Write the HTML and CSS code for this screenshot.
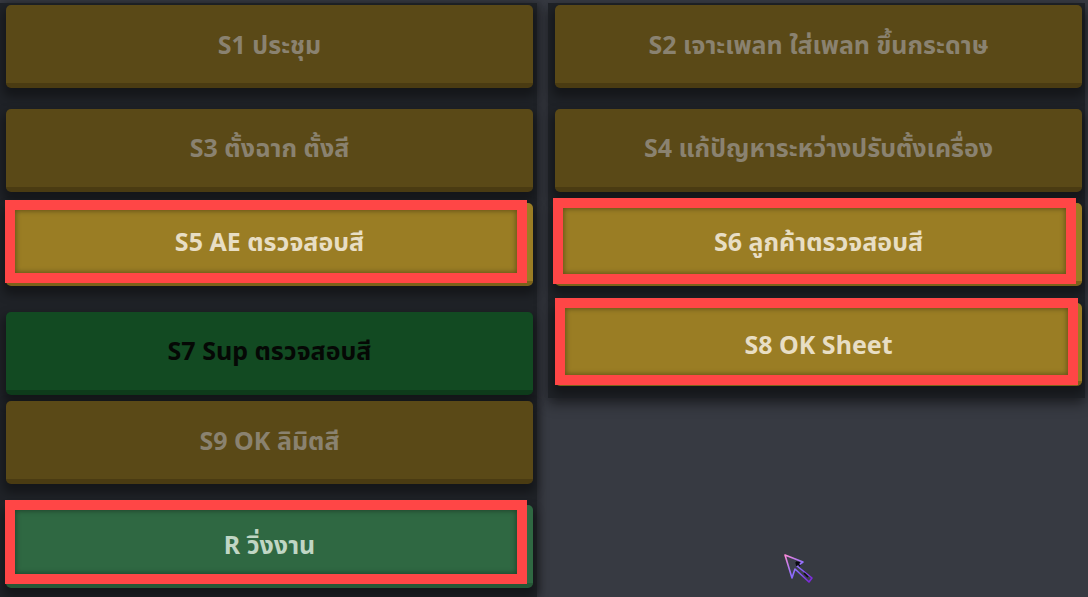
FILE: index.html
```html
<!DOCTYPE html>
<html lang="th">
<head>
<meta charset="utf-8">
<title>Steps</title>
<link rel="stylesheet" href="styles.css">
</head>
<body>
<div class="board">
  <div class="col col-left">
    <div class="slot off2"><div class="btn dim">S1 ประชุม</div></div>
    <div class="slot off7"><div class="btn dim">S3 ตั้งฉาก ตั้งสี</div></div>
    <div class="slot off2"><div class="btn lit">S5 AE ตรวจสอบสี<span class="mark mark-a"></span></div></div>
    <div class="slot off12"><div class="btn green-dark">S7 Sup ตรวจสอบสี</div></div>
    <div class="slot off2"><div class="btn dim">S9 OK ลิมิตสี</div></div>
    <div class="slot off7"><div class="btn green-lit">R วิ่งงาน<span class="mark mark-a"></span></div></div>
  </div>
  <div class="col col-right">
    <div class="slot off2"><div class="btn dim">S2 เจาะเพลท ใส่เพลท ขึ้นกระดาษ</div></div>
    <div class="slot off7"><div class="btn dim">S4 แก้ปัญหาระหว่างปรับตั้งเครื่อง</div></div>
    <div class="slot off2"><div class="btn lit">S6 ลูกค้าตรวจสอบสี<span class="mark mark-b"></span></div></div>
    <div class="slot off4"><div class="btn lit">S8 OK Sheet<span class="mark mark-c"></span></div></div>
  </div>
</div>
<svg class="cursor" width="32" height="32" viewBox="0 0 32 32" aria-hidden="true">
  <defs>
    <linearGradient id="cg" x1="0" y1="0" x2="1" y2="1">
      <stop offset="0" stop-color="#ff8ad8"/>
      <stop offset="0.5" stop-color="#8a6cff"/>
      <stop offset="1" stop-color="#7a1fd6"/>
    </linearGradient>
  </defs>
  <polygon points="1,1 19,8 13,12 28,24 25,28 11,15 8,24" fill="#3d404c" stroke="url(#cg)" stroke-width="1.6" stroke-linejoin="round"/>
  <path d="M12 8 L16 9 M12 8 L13 12 M12 8 L16 12 M20 19 L24 23" stroke="#0a0a12" stroke-width="1.6" fill="none"/>
</svg>
</body>
</html>
```
FILE: styles.css
```css
html, body {
  margin: 0;
  padding: 0;
}
body {
  background: #373a42;
  width: 1088px;
  height: 597px;
  overflow: hidden;
  font-family: "Noto Sans", "Noto Sans Thai", "Open Sans", sans-serif;
  position: relative;
}
.board {
  display: flex;
  gap: 11px;
  padding-top: 3px;
  align-items: flex-start;
}
.col {
  width: 537px;
  box-sizing: border-box;
  display: flex;
  flex-direction: column;
}
.col-left {
  background: #1f2227;
  height: 594px;
  padding-left: 6px;
  box-shadow: 3px 0 8px rgba(0, 0, 0, 0.35);
}
.col-right {
  background: #1f2227;
  height: 395px;
  padding-left: 7px;
  box-shadow: 0 6px 12px rgba(0, 0, 0, 0.45);
}
.slot {
  height: 100px;
  box-sizing: border-box;
}
.off2 { padding-top: 2px; }
.off4 { padding-top: 4px; }
.off7 { padding-top: 7px; }
.off12 { padding-top: 12px; }

.btn {
  position: relative;
  width: 527px;
  height: 83px;
  box-sizing: border-box;
  padding-top: 3px;
  border-radius: 5px;
  border-bottom: 5px solid transparent;
  display: flex;
  align-items: center;
  justify-content: center;
  font-weight: 700;
  font-size: 25px;
  box-shadow: 0 6px 10px 3px rgba(0, 0, 0, 0.35);
}
.dim {
  background: #5a4917;
  border-bottom-color: #4a3b12;
  color: #8a8270;
}
.lit {
  background: #9a7d24;
  border-bottom-color: #7b621a;
  color: #e8dec4;
}
.green-dark {
  background: #124a22;
  border-bottom-color: #0e3b1b;
  color: #050805;
}
.green-lit {
  background: #2f6842;
  border-bottom-color: #265837;
  color: #c0d6c4;
}

.mark {
  position: absolute;
  box-sizing: border-box;
  border: 10px solid #ff4646;
  box-shadow: inset 0 0 5px 1px rgba(0, 0, 0, 0.35);
}
.mark-a {
  left: -1px;
  top: -3px;
  width: 522px;
  height: 83px;
}
.mark-b {
  left: -2px;
  top: -5px;
  width: 523px;
  height: 86px;
}
.mark-c {
  left: 0;
  top: -5px;
  width: 523px;
  height: 87px;
}
.green-lit .mark-a {
  top: -5px;
  height: 84px;
}
.cursor {
  position: absolute;
  left: 784px;
  top: 554px;
}
```
